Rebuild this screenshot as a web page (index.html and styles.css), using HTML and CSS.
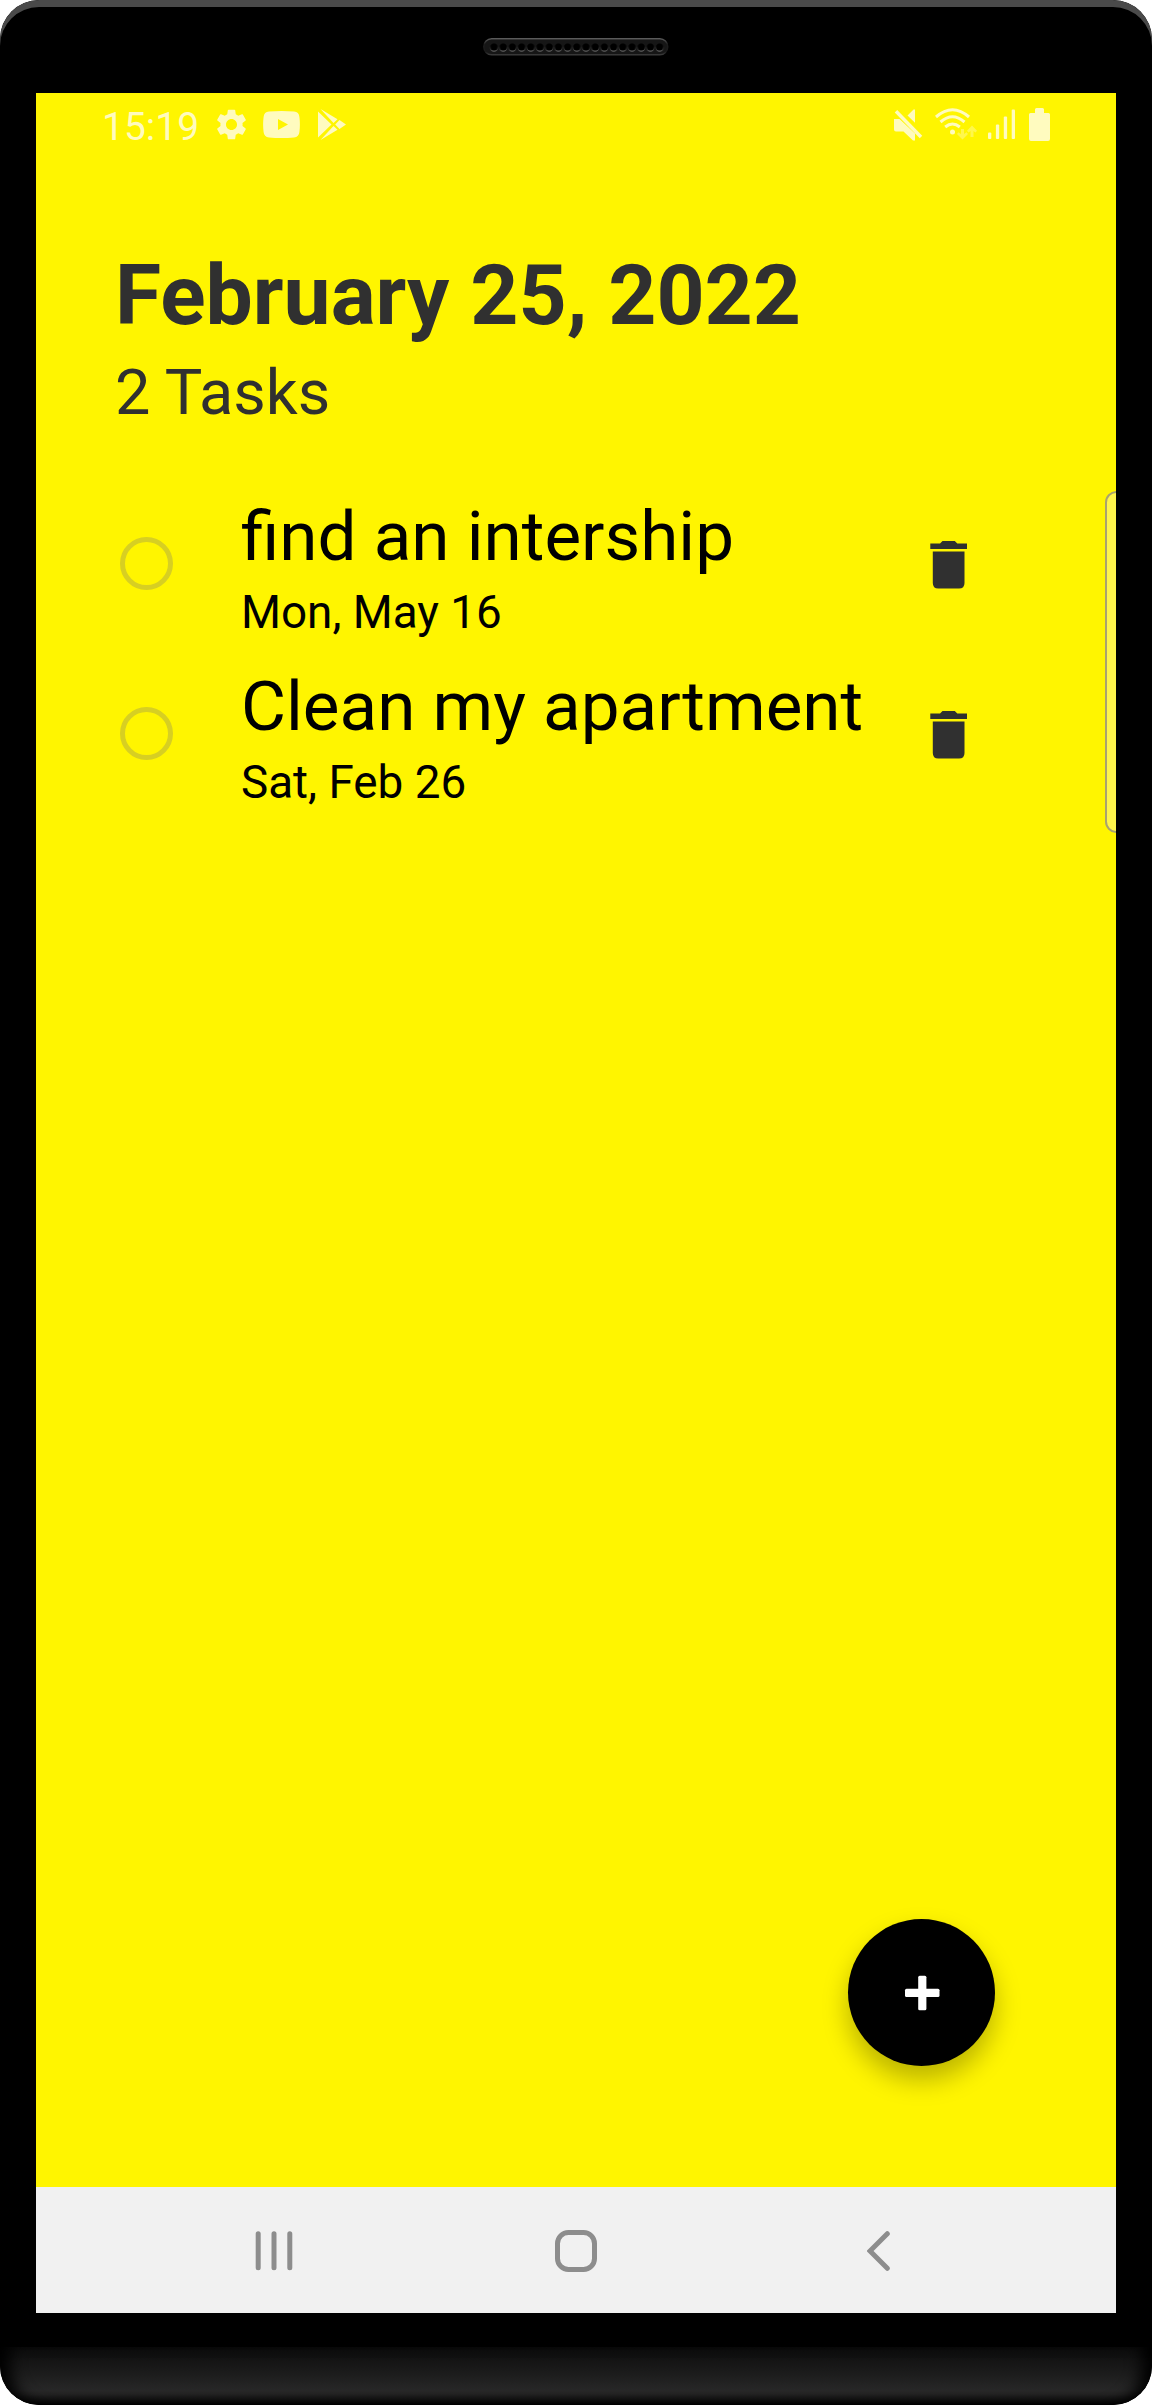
FILE: index.html
```html
<!DOCTYPE html>
<html lang="en">
<head>
<meta charset="utf-8">
<title>Tasks</title>
<link rel="stylesheet" href="styles.css">
</head>
<body>
<div class="phone">
  <div class="bezel-top">
    <svg class="speaker" width="186" height="18" viewBox="0 0 186 18">
      <defs>
        <linearGradient id="rim" x1="0" y1="0" x2="0" y2="1"><stop offset="0" stop-color="#5a5a5a"/><stop offset=".35" stop-color="#1c1c1c"/><stop offset=".8" stop-color="#1a1a1a"/><stop offset="1" stop-color="#3a3a3a"/></linearGradient>
        <linearGradient id="hole" x1="0" y1="0" x2="0" y2="1"><stop offset=".3" stop-color="#111"/><stop offset="1" stop-color="#666"/></linearGradient>
        <pattern id="holes" x="6.4" y="0" width="9.2" height="18" patternUnits="userSpaceOnUse">
          <circle cx="4.6" cy="9.6" r="4.1" fill="url(#hole)"/><circle cx="4.6" cy="9" r="3.5" fill="#000"/>
        </pattern>
      </defs>
      <rect x=".75" y=".75" width="184" height="16" rx="8" fill="#161616" stroke="url(#rim)" stroke-width="1.5"/>
      <rect x="6.4" width="174.8" height="18" fill="url(#holes)"/>
    </svg>
  </div>
  <div class="screen">
    <header class="status">
      <span class="clock">15:19</span>
      <svg class="gear" width="37" height="37" viewBox="0 0 24 24"><path d="M19.14 12.94c.04-.3.06-.61.06-.94 0-.32-.02-.64-.07-.94l2.03-1.58c.18-.14.23-.41.12-.61l-1.92-3.32c-.12-.22-.37-.29-.59-.22l-2.39.96c-.5-.38-1.03-.7-1.62-.94l-.36-2.54c-.04-.24-.24-.41-.48-.41h-3.84c-.24 0-.43.17-.47.41l-.36 2.54c-.59.24-1.13.57-1.62.94l-2.39-.96c-.22-.08-.47 0-.59.22L2.74 8.87c-.12.21-.08.47.12.61l2.03 1.58c-.05.3-.09.63-.09.94s.02.64.07.94l-2.03 1.58c-.18.14-.23.41-.12.61l1.92 3.32c.12.22.37.29.59.22l2.39-.96c.5.38 1.03.7 1.62.94l.36 2.54c.05.24.24.41.48.41h3.84c.24 0 .44-.17.47-.41l.36-2.54c.59-.24 1.13-.56 1.62-.94l2.39.96c.22.08.47 0 .59-.22l1.92-3.32c.12-.22.07-.47-.12-.61l-2.01-1.58zM12 15.6c-1.98 0-3.6-1.62-3.6-3.6s1.62-3.6 3.6-3.6 3.6 1.62 3.6 3.6-1.62 3.6-3.6 3.6z"/></svg>
      <svg class="tube" width="37" height="27" viewBox="0 0 37 27"><path fill-rule="evenodd" d="M6 .6Q18.500-.4 31 .6Q36 1 36.400 6Q37.400 13.500 36.400 21Q36 26 31 26.400Q18.500 27.400 6 26.400Q1 26 .6 21Q-.4 13.500.6 6Q1 1 6 .6ZM15 8v11l10-5.500z"/></svg>
      <svg class="play" width="28" height="31" viewBox="0 0 28 31"><path d="M0 2.500 13.500 15.500 0 28.500zM2.500 0 19.500 10.200 15.500 14zM2.500 31 19.500 20.800 15.500 17zM21.500 11 28 15.500 21.500 20 17.200 15.500z"/></svg>
      <span class="spacer"></span>
      <svg class="mute" width="29" height="32" viewBox="0 0 29 32"><path d="M0 10h5.500L21 24.500V31.500h-2L9.500 22.500H2Q0 22.500 0 20.500zM13.500 6.500 19.500.5H21V13.700z"/><path d="M2 2.200 27 28" stroke="#fffbbf" stroke-width="3.400" fill="none"/></svg>
      <svg class="wifi" width="42" height="33" viewBox="0 0 42 33"><g fill="none" stroke="#fffbbf" stroke-width="3"><path d="M1 9Q17.500-5.500 34 9M5.500 14Q17.500 3.500 29.500 14M10.200 19Q17.500 13 24.800 19"/></g><circle cx="17.500" cy="24" r="2.500"/><path opacity=".4" d="M26 21h3v5l2.500-1.800L33 26l-5.500 5.500L22 26l1.400-1.800L26 26zM35.500 29h3v-6l2 1.500 1.500-1.800-5-5.200-5 5.200 1.500 1.800 2-1.500z"/></svg>
      <svg class="signal" width="27" height="31" viewBox="0 0 27 31"><rect y="23.500" width="3.300" height="6.500" rx="1"/><rect x="7.900" y="15.500" width="3.300" height="14.500" rx="1"/><rect x="15.800" y="7.500" width="3.300" height="22.500" rx="1"/><rect x="23.700" y=".5" width="3.300" height="29.500" rx="1"/></svg>
      <svg class="battery" width="21" height="33" viewBox="0 0 21 33"><path d="M6 1.500Q6 0 7.500 0h6Q15 0 15 1.500V5h4.500Q21 5 21 6.500V31Q21 33 19 33H2Q0 33 0 31V6.500Q0 5 1.500 5H6z"/></svg>
    </header>
    <main class="content">
      <h1 class="date">February 25, 2022</h1>
      <p class="count">2 Tasks</p>
      <ul class="tasks">
        <li class="task">
          <span class="check"></span>
          <div class="text"><div class="name">find an intership</div><div class="due">Mon, May 16</div></div>
          <svg class="trash" width="38" height="48" viewBox="0 0 38 48"><path d="M.3 2.500H10L12.500 0h12.300l2.500 2.500H37V8H.3zM2.800 10.500h31.700V42Q34.500 47.500 29 47.500H8.300Q2.800 47.500 2.800 42z"/></svg>
        </li>
        <li class="task">
          <span class="check"></span>
          <div class="text"><div class="name">Clean my apartment</div><div class="due">Sat, Feb 26</div></div>
          <svg class="trash" width="38" height="48" viewBox="0 0 38 48"><path d="M.3 2.500H10L12.500 0h12.300l2.500 2.500H37V8H.3zM2.800 10.500h31.700V42Q34.500 47.500 29 47.500H8.300Q2.800 47.500 2.800 42z"/></svg>
        </li>
      </ul>
    </main>
    <div class="edge-handle"></div>
    <div class="fab"><svg width="36" height="36" viewBox="0 0 36 36"><rect x="1" y="13.800" width="34.500" height="8.200" rx="1.500"/><rect x="14.200" y=".7" width="8.200" height="34.500" rx="1.500"/></svg></div>
    <nav class="nav">
      <svg class="recents" width="38" height="40" viewBox="0 0 38 40"><path d="M3.200 2.700V36.800M19 2.700V36.800M34.800 2.700V36.800"/></svg>
      <svg class="home" width="42" height="42" viewBox="0 0 42 42"><rect x="2.500" y="2.500" width="37" height="37" rx="11"/></svg>
      <svg class="back" width="24" height="40" viewBox="0 0 24 40"><path d="M20.300 2.700 3 20 20.300 37.300"/></svg>
    </nav>
  </div>
  <div class="chin"></div>
</div>
</body>
</html>
```
FILE: styles.css
```css
* { box-sizing: border-box; }
body { margin: 0; background: #fff; font-family: Roboto, sans-serif; }
svg { display: block; flex: none; }
.phone {
  width: 1152px;
  height: 2405px;
  border-radius: 39px;
  background: #000;
  overflow: hidden;
  display: flex;
  flex-direction: column;
}
.bezel-top {
  height: 93px;
  padding-top: 38px;
  border-radius: 39px 39px 0 0;
  box-shadow: inset 0 7px 0 #4a4a4a;
  display: flex;
  justify-content: center;
}
.screen {
  position: relative;
  width: 1080px;
  height: 2220px;
  margin: 0 36px;
  background: #fff500;
  display: flex;
  flex-direction: column;
  overflow: hidden;
}
.status {
  height: 63px;
  padding: 0 66px 0 66px;
  display: flex;
  align-items: center;
  color: #fffbbf;
  fill: #fffbbf;
}
.clock { width: 111px; font-size: 39px; line-height: 46px; padding-top: 5px; }
.tube { margin-left: 13px; }
.play { margin-left: 18px; }
.spacer { flex: 1; }
.wifi { margin-left: 12px; }
.signal { margin-left: 11px; }
.battery { margin-left: 14px; }
.content { flex: 1; padding: 90px 130px 0 79px; color: #303030; }
.date { margin: 0; font-size: 84px; line-height: 100px; font-weight: 700; white-space: nowrap; }
.count { margin: 10px 0 0; font-size: 63px; line-height: 74px; }
.tasks { margin: 48px 0 0; padding: 0; list-style: none; }
.task { height: 170px; display: flex; align-items: center; }
.check { width: 53px; height: 53px; margin-left: 5px; border: 5.500px solid #d7cf22; border-radius: 50%; flex: none; }
.text { align-self: flex-start; width: 689px; margin-left: 68px; padding-top: 19px; color: #000; white-space: nowrap; }
.name { font-size: 69.200px; line-height: 80px; }
.due { margin-top: 8px; font-size: 45.800px; line-height: 56px; }
.trash { fill: #303030; margin-top: 3px; }
.edge-handle {
  position: absolute;
  top: 398px;
  right: -12px;
  width: 23px;
  height: 342px;
  border: 2px solid #a9a26f;
  border-radius: 12px;
  background: #fff54c;
}
.fab {
  position: absolute;
  left: 812px;
  top: 1826px;
  width: 147px;
  height: 147px;
  border-radius: 50%;
  background: #000;
  box-shadow: 0 14px 26px rgba(0, 0, 0, .27);
  display: flex;
  align-items: center;
  justify-content: center;
}
.fab svg { fill: #fff; }
.nav {
  height: 126px;
  padding: 2px 0 0 219px;
  background: #f1f1f1;
  display: flex;
  align-items: center;
  fill: none;
  stroke: #8d8d8d;
  stroke-width: 5;
  stroke-linecap: round;
}
.home { margin-left: 262px; }
.back { margin-left: 270px; }
.chin {
  height: 58px;
  margin-top: 34px;
  border-radius: 0 0 39px 39px;
  background: linear-gradient(#0c0c0c, #1a1a1a 40%, #272727 75%, #222 82%, #000 100%);
  box-shadow: inset 18px 0 16px -8px #000, inset -18px 0 16px -8px #000;
}
```
